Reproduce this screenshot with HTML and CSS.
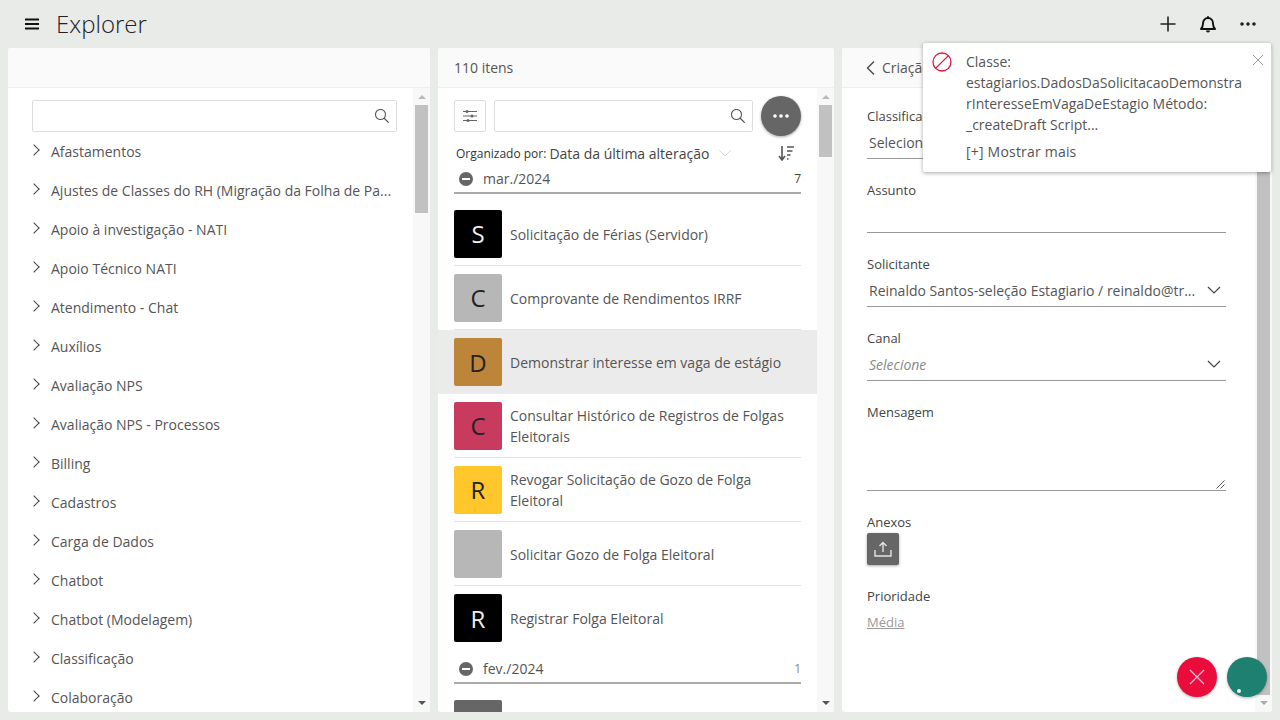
FILE: index.html
```html
<!DOCTYPE html>
<html>
  <head>
    <title>Explorer</title>
    <link rel="stylesheet" href="styles.css">
  </head>
  <body>
    <div class="topbar">
      <svg class="menuIcon" width="16" height="12" viewBox="0 0 16 12"><path d="M1 1.500h14M1 6h14M1 10.500h14" stroke="#111" stroke-width="2"/></svg>
      <h1>Explorer</h1>
      <div class="topActions">
        <svg width="16" height="16" viewBox="0 0 16 16"><path d="M8 0.500v15M0.500 8h15" stroke="#222" stroke-width="1.600"/></svg>
        <svg width="16" height="17" viewBox="0 0 16 17"><path d="M1 13c1.500-1.500 2-2.500 2-5.500 0-3 2-5.500 5-5.500s5 2.500 5 5.500c0 3 .5 4 2 5.500z" fill="none" stroke="#111" stroke-width="1.900" stroke-linejoin="round"/><path d="M6 14.500a2 2 0 0 0 4 0z" fill="#111"/><path d="M8 0v2" stroke="#111" stroke-width="1.500"/></svg>
        <svg width="16" height="4" viewBox="0 0 16 4"><circle cx="2" cy="2" r="1.800" fill="#222"/><circle cx="8" cy="2" r="1.800" fill="#222"/><circle cx="14" cy="2" r="1.800" fill="#222"/></svg>
      </div>
    </div>

    <div class="columns">
      <div class="panel treePanel">
        <div class="panelHead"></div>
        <div class="panelBody">
          <div class="panelContent treeContent">
            <div class="searchBox">
              <svg width="14" height="14" viewBox="0 0 14 14"><circle cx="5.500" cy="5.500" r="5" fill="none" stroke="#555" stroke-width="1.100"/><path d="M9 9l4.700 4.700" stroke="#555" stroke-width="1.200"/></svg>
            </div>
            <ul class="tree">
              <li>Afastamentos</li>
              <li>Ajustes de Classes do RH (Migração da Folha de Pa...</li>
              <li>Apoio à investigação - NATI</li>
              <li>Apoio Técnico NATI</li>
              <li>Atendimento - Chat</li>
              <li>Auxílios</li>
              <li>Avaliação NPS</li>
              <li>Avaliação NPS - Processos</li>
              <li>Billing</li>
              <li>Cadastros</li>
              <li>Carga de Dados</li>
              <li>Chatbot</li>
              <li>Chatbot (Modelagem)</li>
              <li>Classificação</li>
              <li>Colaboração</li>
            </ul>
          </div>
          <div class="scrollbar">
            <span class="arrowUp"></span>
            <div class="track"><div class="thumb thumbTree"></div></div>
            <span class="arrowDown"></span>
          </div>
        </div>
      </div>

      <div class="panel listPanel">
        <div class="panelHead">110 itens</div>
        <div class="panelBody">
          <div class="panelContent listContent">
            <div class="listTools">
              <div class="filterBtn">
                <svg width="16" height="14" viewBox="0 0 16 14"><path d="M1 2.500h14M1 7h14M1 11.500h14" stroke="#666" stroke-width="1"/><circle cx="5" cy="2.500" r="1.500" fill="#666"/><circle cx="10" cy="7" r="1.500" fill="#666"/><circle cx="6" cy="11.500" r="1.500" fill="#666"/></svg>
              </div>
              <div class="searchBox listSearch">
                <svg width="14" height="14" viewBox="0 0 14 14"><circle cx="5.500" cy="5.500" r="5" fill="none" stroke="#555" stroke-width="1.100"/><path d="M9 9l4.700 4.700" stroke="#555" stroke-width="1.200"/></svg>
              </div>
              <div class="moreBtn">
                <svg width="16" height="4" viewBox="0 0 16 4"><circle cx="2" cy="2" r="1.800" fill="#fff"/><circle cx="8" cy="2" r="1.800" fill="#fff"/><circle cx="14" cy="2" r="1.800" fill="#fff"/></svg>
              </div>
            </div>
            <div class="sortRow">
              <span class="sortLabel">Organizado por:</span>
              <span class="sortValue">Data da última alteração</span>
              <svg class="sortCaret" width="14" height="8" viewBox="0 0 14 8"><path d="M1 1l6 6 6-6" fill="none" stroke="#ddd" stroke-width="1"/></svg>
              <svg class="sortIcon" width="16" height="16" viewBox="0 0 16 16"><path d="M4 1v13M1 11l3 4 3-4" fill="none" stroke="#555" stroke-width="1.600"/><path d="M9 2h7M9 6h5.500M9 10h3.500M9 14h1.500" stroke="#555" stroke-width="1.700"/></svg>
            </div>
            <div class="groupHead">
              <span class="minus"></span>
              <span class="groupName">mar./2024</span>
              <span class="groupCount">7</span>
            </div>
            <div class="item">
              <div class="tile tileBlack">S</div>
              <div class="itemText">Solicitação de Férias (Servidor)</div>
            </div>
            <div class="item">
              <div class="tile tileGrey">C</div>
              <div class="itemText">Comprovante de Rendimentos IRRF</div>
            </div>
            <div class="item selected">
              <div class="tile tileBrown">D</div>
              <div class="itemText">Demonstrar interesse em vaga de estágio</div>
            </div>
            <div class="item">
              <div class="tile tileRed">C</div>
              <div class="itemText">Consultar Histórico de Registros de Folgas Eleitorais</div>
            </div>
            <div class="item">
              <div class="tile tileYellow">R</div>
              <div class="itemText">Revogar Solicitação de Gozo de Folga Eleitoral</div>
            </div>
            <div class="item">
              <div class="tile tileGrey"></div>
              <div class="itemText">Solicitar Gozo de Folga Eleitoral</div>
            </div>
            <div class="item last">
              <div class="tile tileBlack">R</div>
              <div class="itemText">Registrar Folga Eleitoral</div>
            </div>
            <div class="groupHead second">
              <span class="minus"></span>
              <span class="groupName">fev./2024</span>
              <span class="groupCount">1</span>
            </div>
            <div class="item">
              <div class="tile tileDark"></div>
            </div>
          </div>
          <div class="scrollbar">
            <span class="arrowUp"></span>
            <div class="track"><div class="thumb thumbList"></div></div>
            <span class="arrowDown"></span>
          </div>
        </div>
      </div>

      <div class="panel formPanel">
        <div class="panelHead">
          <svg width="9" height="14" viewBox="0 0 9 14"><path d="M8 .5L1.500 7 8 13.500" fill="none" stroke="#444" stroke-width="1.300"/></svg>
          <span>Criação</span>
        </div>
        <div class="panelBody">
          <div class="panelContent formContent">
            <div class="field">
              <label>Classificação</label>
              <div class="fieldValue muted">Selecione</div>
            </div>
            <div class="field">
              <label>Assunto</label>
              <div class="fieldValue"></div>
            </div>
            <div class="field">
              <label>Solicitante</label>
              <div class="fieldValue">
                <span class="valueText">Reinaldo Santos-seleção Estagiario / reinaldo@tr...</span>
                <svg width="14" height="8" viewBox="0 0 14 8"><path d="M1 1l6 6 6-6" fill="none" stroke="#444" stroke-width="1.200"/></svg>
              </div>
            </div>
            <div class="field">
              <label>Canal</label>
              <div class="fieldValue placeholder">
                <span class="valueText">Selecione</span>
                <svg width="14" height="8" viewBox="0 0 14 8"><path d="M1 1l6 6 6-6" fill="none" stroke="#444" stroke-width="1.200"/></svg>
              </div>
            </div>
            <div class="field fieldMessage">
              <label>Mensagem</label>
              <div class="textArea">
                <svg width="9" height="9" viewBox="0 0 9 9"><path d="M0.500 8.500l8-8M4.500 8.500l4-4" stroke="#555" stroke-width="1"/></svg>
              </div>
            </div>
            <div class="attach">
              <label>Anexos</label>
              <div class="uploadBtn">
                <svg width="18" height="16" viewBox="0 0 18 16"><path d="M9 11V1.500M5.500 5L9 1.500 12.500 5M1 9v6H17V9" fill="none" stroke="#e4e4e4" stroke-width="1.400"/></svg>
              </div>
            </div>
            <div class="priority">
              <label>Prioridade</label>
              <a>Média</a>
            </div>
          </div>
          <div class="scrollbar">
            <div class="track"><div class="thumb thumbForm"></div></div>
            <span class="arrowDown"></span>
          </div>
        </div>
      </div>
    </div>

    <div class="toast">
      <svg class="toastIcon" width="20" height="20" viewBox="0 0 20 20"><circle cx="10" cy="10" r="9" fill="none" stroke="#e8103c" stroke-width="1.300"/><path d="M3.600 16.400L16.400 3.600" stroke="#e8103c" stroke-width="1.300"/></svg>
      <div class="toastBody">
        <p>Classe: estagiarios.DadosDaSolicitacaoDemonstrarInteresseEmVagaDeEstagio Método: _createDraft Script...</p>
        <div class="toastMore">[+] Mostrar mais</div>
      </div>
      <svg class="toastClose" width="12" height="12" viewBox="0 0 12 12"><path d="M1 1l10 10M11 1L1 11" stroke="#999" stroke-width="1"/></svg>
    </div>

    <div class="fabs">
      <div class="fab fabRed">
        <svg width="16" height="16" viewBox="0 0 16 16"><path d="M1 1l14 14M15 1L1 15" stroke="#fbd" stroke-width="1.200"/></svg>
      </div>
      <div class="fab fabGreen"><span class="fabDot"></span></div>
    </div>
  </body>
</html>
```

FILE: styles.css
```css
* { box-sizing: border-box; }
html, body { height: 100%; }
body { margin: 0; background: #e9ebe9; color: #444; font-family: "Open Sans", sans-serif; font-size: 14px; overflow: hidden; }

.topbar { height: 48px; display: flex; align-items: center; padding: 0 24px; }
.menuIcon { flex: none; }
.topbar h1 { margin: 0 0 0 16px; font-size: 24px; font-weight: 300; color: #222; line-height: 48px; }
.topActions { margin-left: auto; display: flex; align-items: center; gap: 24px; }

.columns { display: flex; gap: 8px; height: 664px; padding: 0 8px; }
.panel { background: #fff; border-radius: 3px; display: flex; flex-direction: column; overflow: hidden; }
.treePanel { width: 422px; }
.listPanel { width: 396px; }
.formPanel { width: 430px; }
.panelHead { height: 40px; flex: none; background: #fafafa; border-bottom: 1px solid #eee; padding: 0 16px; line-height: 39px; color: #555; display: flex; align-items: center; }
.formPanel .panelHead { padding-left: 24px; gap: 7px; }
.panelBody { flex: 1; display: flex; min-height: 0; }
.panelContent { flex: 1; min-width: 0; overflow: hidden; }

.scrollbar { width: 17px; flex: none; background: #f8f8f8; display: flex; flex-direction: column; align-items: center; }
.track { flex: 1; width: 100%; min-height: 0; padding-left: 2px; }
.thumb { background: #c1c1c1; width: 13px; }
.thumbTree { height: 108px; }
.thumbList { height: 52px; }
.thumbForm { height: 100%; }
.arrowUp, .arrowDown { width: 0; height: 0; border: 4px solid transparent; }
.arrowUp { border-bottom: 4px solid #bbb; border-top-width: 0; margin: 7px 0 6px; }
.arrowDown { border-top: 4px solid #555; border-bottom-width: 0; margin: 6px 0 7px; }
.formPanel .arrowDown { border-top-color: #aaa; }

.treeContent { padding: 12px 16px 0 24px; }
.searchBox { height: 32px; border: 1px solid #ddd; border-radius: 2px; display: flex; align-items: center; justify-content: flex-end; padding-right: 7px; background: #fff; }
.tree { list-style: none; margin: 0; padding: 0; }
.tree li { height: 39px; line-height: 39px; padding-left: 19px; position: relative; white-space: nowrap; color: #555; }
.tree li::before { content: ""; position: absolute; left: -2px; top: 14px; width: 7px; height: 7px; border-top: 1px solid #444; border-right: 1px solid #444; transform: rotate(45deg); }

.listContent { padding-top: 8px; }
.listTools { display: flex; align-items: center; gap: 8px; padding: 0 16px; height: 40px; }
.filterBtn { width: 32px; height: 32px; border: 1px solid #ddd; border-radius: 2px; display: flex; align-items: center; justify-content: center; flex: none; }
.listSearch { flex: 1; }
.moreBtn { width: 40px; height: 40px; border-radius: 50%; background: #666; box-shadow: 0 1px 3px rgba(0,0,0,.35); display: flex; align-items: center; justify-content: center; flex: none; }

.sortRow { display: flex; align-items: center; padding: 0 16px 0 18px; height: 24px; margin-top: 5px; }
.sortLabel { font-size: 12px; color: #333; margin-right: 3px; }
.sortValue { font-size: 14px; color: #444; }
.sortCaret { margin-left: 9px; }
.sortIcon { margin-left: auto; margin-right: 7px; }

.groupHead { margin: 0 16px; height: 29px; border-bottom: 2px solid #aaa; display: flex; align-items: center; padding-bottom: 2px; }
.groupHead.second { height: 34px; padding-top: 5px; }
.minus { width: 14px; height: 14px; border-radius: 50%; background: #666; margin: 2px 10px 0 5px; display: flex; align-items: center; justify-content: center; }
.minus::after { content: ""; width: 8px; height: 2px; background: #fff; }
.groupName { color: #555; margin-top: 2px; }
.groupCount { margin-left: auto; margin-top: 2px; font-size: 12px; color: #444; }
.second .groupCount { color: #888; }

.item { height: 64px; margin: 0 16px; display: flex; align-items: center; gap: 8px; border-bottom: 1px solid #e4e4e4; }
.groupHead + .item { height: 72px; padding-top: 8px; }
.item.last { border-bottom: none; }
.item.selected { background: #ebebeb; margin: 0; padding: 0 16px; border-bottom: none; }
.tile { width: 48px; height: 48px; flex: none; border-radius: 2px; display: flex; align-items: center; justify-content: center; font-size: 24px; color: #222; }
.tileBlack { background: #000; color: #eee; }
.tileGrey { background: #b7b7b7; }
.tileBrown { background: #bd853a; }
.tileRed { background: #c93a5f; }
.tileYellow { background: #ffc72c; }
.tileDark { background: #666; }
.itemText { color: #555; line-height: 21px; margin-top: 1px; }
.selected .itemText, .last .itemText { margin-top: 0; }

.formContent { padding: 0 29px 0 25px; overflow: visible; }
.field { height: 74px; padding-top: 19px; }
label { display: block; font-size: 13px; line-height: 18px; color: #444; }
.fieldValue { height: 33px; border-bottom: 1px solid #999; display: flex; align-items: center; justify-content: space-between; padding: 0 5px 0 2px; margin-top: 1px; color: #555; }
.valueText { white-space: nowrap; }
.placeholder .valueText { font-style: italic; color: #888; }
.fieldMessage { height: 107px; }
.textArea { height: 70px; border-bottom: 1px solid #999; display: flex; align-items: flex-end; justify-content: flex-end; padding: 0 1px 1px 0; }
.attach { padding-top: 22px; }
.uploadBtn { width: 32px; height: 32px; background: #666; border-radius: 2px; box-shadow: 0 1px 3px rgba(0,0,0,.35); display: flex; align-items: center; justify-content: center; margin-top: 2px; }
.priority { padding-top: 22px; }
.priority a { display: block; margin-top: 8px; font-size: 13px; color: #999; text-decoration: underline; }

.toast { position: absolute; left: 923px; top: 43px; width: 348px; height: 129px; background: #fff; border-radius: 2px; box-shadow: 0 1px 4px rgba(0,0,0,.35); display: flex; padding: 8px 0 0 9px; }
.toastIcon { flex: none; margin-top: 1px; }
.toastBody { width: 278px; margin-left: 14px; color: #555; }
.toastBody p { margin: 0; line-height: 21px; overflow-wrap: break-word; }
.toastMore { margin-top: 6px; line-height: 21px; letter-spacing: .2px; }
.toastClose { position: absolute; right: 7px; top: 11px; }

.fabs { position: absolute; right: 13px; bottom: 23px; display: flex; gap: 10px; }
.fab { width: 40px; height: 40px; border-radius: 50%; box-shadow: 0 1px 3px rgba(0,0,0,.3); display: flex; align-items: center; justify-content: center; position: relative; }
.fabRed { background: #ea0d3c; }
.fabGreen { background: #1d8070; }
.fabDot { position: absolute; left: 10px; bottom: 4px; width: 4px; height: 4px; border-radius: 50%; background: #e6f0ee; }
```
